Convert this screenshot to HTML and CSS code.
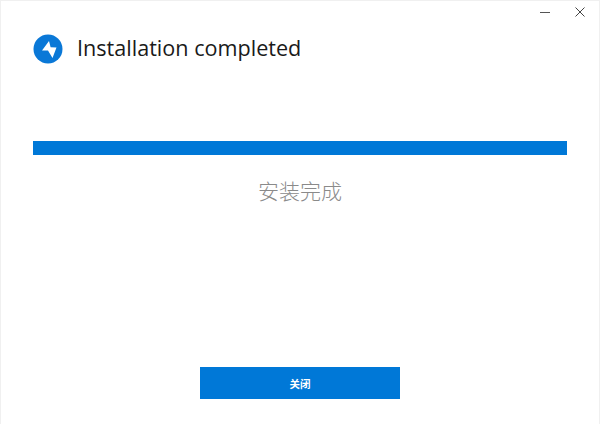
FILE: index.html
```html
<!DOCTYPE html>
<html lang="en">
<head>
  <meta charset="UTF-8" />
  <title>Installation completed</title>
  <link rel="stylesheet" href="styles.css">
</head>
<body>
  <div class="window">
    <div class="titleBar">
      <svg class="winIcon" width="12" height="12" viewBox="0 0 12 12"><path d="M1 6.5H11" stroke="#555" stroke-width="1" fill="none"/></svg>
      <svg class="winIcon" width="12" height="12" viewBox="0 0 12 12"><path d="M1.5 1.5L10.5 10.5M10.5 1.5L1.5 10.5" stroke="#444" stroke-width="1" fill="none"/></svg>
    </div>
    <div class="header">
      <svg class="logo" width="30" height="30" viewBox="0 0 30 30">
        <circle cx="15" cy="15" r="14.5" fill="#0a78d7"/>
        <path d="M16 7L9 16.5L15 16.6L19.5 24L23.5 13.6L17.6 13.2Z" fill="#fff"/>
      </svg>
      <h1>Installation completed</h1>
    </div>
    <div class="progress"></div>
    <div class="status">安装完成</div>
    <button class="closeBtn">关闭</button>
  </div>
</body>
</html>
```

FILE: styles.css
```css
html, body {
  margin: 0;
  height: 100%;
}
body {
  background: #fff;
  font-family: "Open Sans", "Noto Sans CJK SC", sans-serif;
}
.window {
  box-sizing: border-box;
  width: 600px;
  height: 424px;
  display: flex;
  flex-direction: column;
  align-items: center;
  border: 1px solid #f0f0f0;
  border-bottom: none;
  padding: 0 32px 25px;
}
.titleBar {
  align-self: stretch;
  margin-right: -19px;
  height: 17px;
  display: flex;
  justify-content: flex-end;
  align-items: flex-end;
  gap: 23px;
}
.header {
  align-self: stretch;
  display: flex;
  align-items: center;
  gap: 14px;
  margin-top: 16px;
  height: 30px;
}
.logo {
  display: block;
  flex-shrink: 0;
}
h1 {
  margin: 0 0 2px;
  font-size: 21.6px;
  font-weight: 400;
  color: #1a1a1a;
  line-height: 30px;
  white-space: nowrap;
}
.progress {
  align-self: stretch;
  height: 14px;
  margin-top: 77px;
  background: #0078d7;
}
.status {
  margin-top: 20px;
  font-family: "Noto Sans CJK SC", sans-serif;
  font-size: 21px;
  font-weight: 300;
  line-height: 30px;
  color: #8a8a8a;
}
.closeBtn {
  width: 200px;
  height: 32px;
  margin-top: auto;
  padding: 0;
  border: none;
  background: #0078d7;
  color: #fff;
  font-family: "Noto Sans CJK SC", sans-serif;
  font-size: 10.5px;
  font-weight: 700;
}
```
